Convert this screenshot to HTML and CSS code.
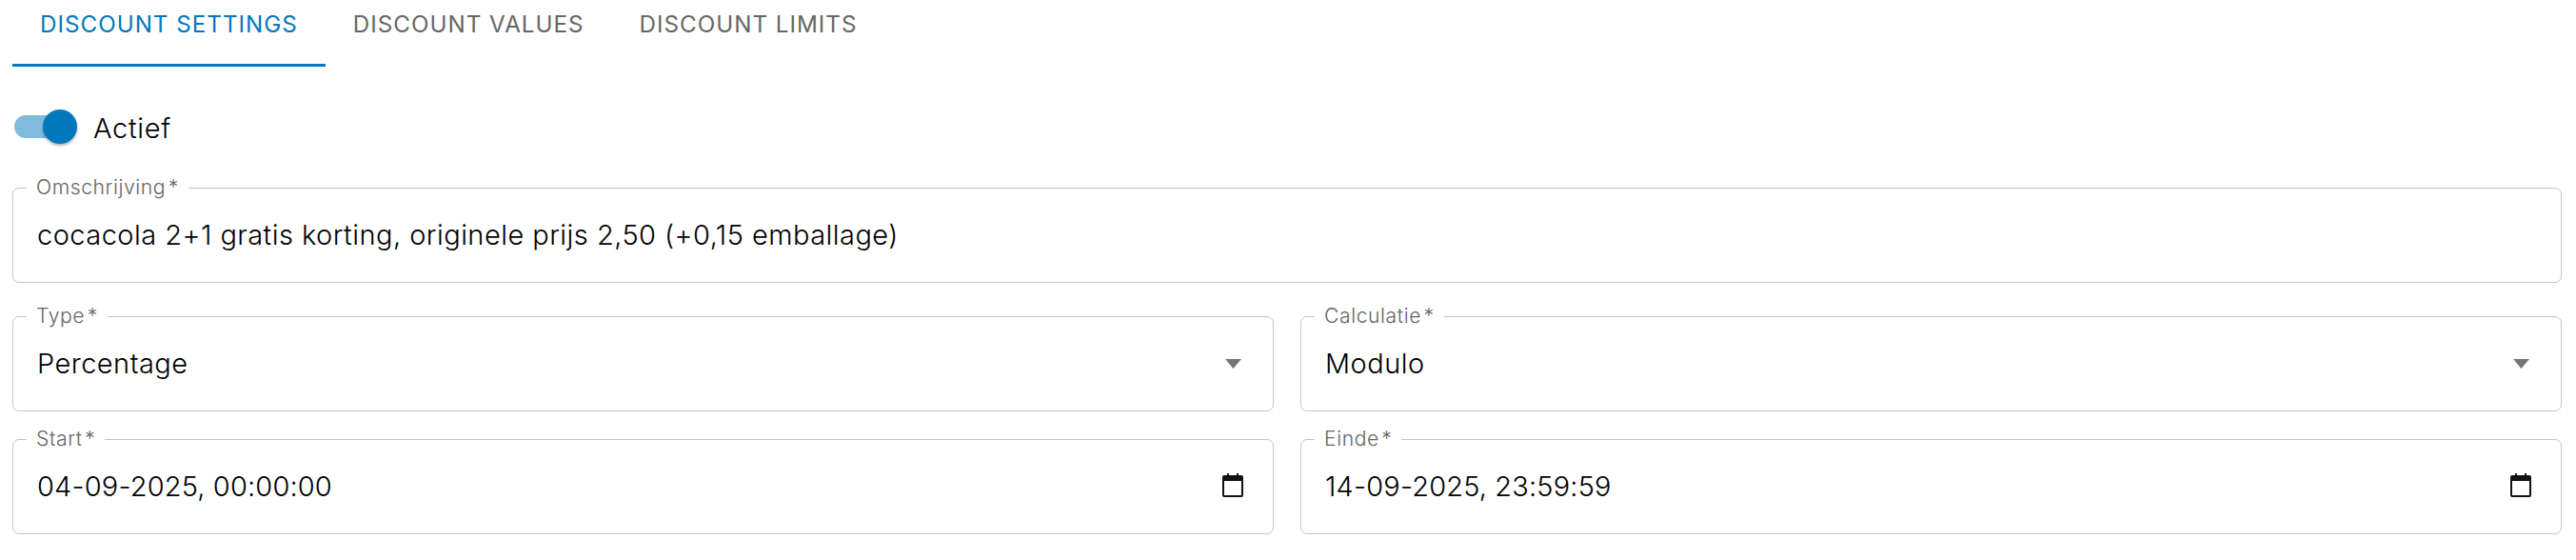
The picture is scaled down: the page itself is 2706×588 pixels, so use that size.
FILE: index.html
```html
<!DOCTYPE html>
<html lang="en">
<head>
    <meta charset="UTF-8">
    <title>Discount settings</title>
    <link rel="stylesheet" href="styles.css">
</head>
<body>
    <div class="tabs">
        <a class="tab active" href="#settings">DISCOUNT SETTINGS</a>
        <a class="tab" href="#values">DISCOUNT VALUES</a>
        <a class="tab" href="#limits">DISCOUNT LIMITS</a>
    </div>

    <div class="form">
        <div class="toggle-row">
            <span class="switch"><span class="switch-thumb"></span></span>
            <span class="toggle-label">Actief</span>
        </div>

        <div class="field">
            <span class="field-label">Omschrijving *</span>
            <span class="field-value">cocacola 2+1 gratis korting, originele prijs 2,50 (+0,15 emballage)</span>
        </div>

        <div class="row">
            <div class="field">
                <span class="field-label">Type *</span>
                <span class="field-value">Percentage</span>
                <svg class="arrow" viewBox="0 0 17 10"><path d="M0 0h17L8.5 10z"/></svg>
            </div>
            <div class="field">
                <span class="field-label">Calculatie *</span>
                <span class="field-value">Modulo</span>
                <svg class="arrow" viewBox="0 0 17 10"><path d="M0 0h17L8.5 10z"/></svg>
            </div>
        </div>

        <div class="row row-dates">
            <div class="field">
                <span class="field-label">Start *</span>
                <span class="field-value date">04-09-2025, 00:00:00</span>
                <svg class="calendar" viewBox="0 0 22 25"><path d="M5 0h2v2h8V0h2v2h3a2 2 0 0 1 2 2v19a2 2 0 0 1-2 2H2a2 2 0 0 1-2-2V4a2 2 0 0 1 2-2h3zM2 8v15h18V8z"/></svg>
            </div>
            <div class="field">
                <span class="field-label">Einde *</span>
                <span class="field-value date">14-09-2025, 23:59:59</span>
                <svg class="calendar" viewBox="0 0 22 25"><path d="M5 0h2v2h8V0h2v2h3a2 2 0 0 1 2 2v19a2 2 0 0 1-2 2H2a2 2 0 0 1-2-2V4a2 2 0 0 1 2-2h3zM2 8v15h18V8z"/></svg>
            </div>
        </div>
    </div>
</body>
</html>
```
FILE: styles.css
```css
body {
    font-family: Inter, "Open Sans", sans-serif;
    font-weight: 300;
    background-color: #fff;
    margin: 0;
    padding: 0;
    color: #000;
}

.tabs {
    display: flex;
    padding-left: 13px;
    height: 70px;
}

.tab {
    padding: 0 29px;
    height: 67px;
    line-height: 52px;
    font-size: 24.2px;
    font-weight: 400;
    letter-spacing: 1px;
    color: #666;
    text-decoration: none;
    white-space: nowrap;
}

.tab.active {
    color: #0277bd;
    border-bottom: 3px solid #0277bd;
}

.form {
    padding: 0 15px 0 13px;
}

.toggle-row {
    display: flex;
    align-items: center;
    height: 36px;
    margin-top: 45px;
    padding-left: 2px;
}

.switch {
    position: relative;
    display: block;
    width: 60px;
    height: 24px;
    border-radius: 12px;
    background-color: #80bbde;
}

.switch-thumb {
    position: absolute;
    top: -6px;
    right: -6px;
    width: 36px;
    height: 36px;
    border-radius: 50%;
    background-color: #0277bd;
    box-shadow: 0 2px 3px rgba(0, 0, 0, 0.3);
}

.toggle-label {
    margin-left: 23px;
    padding-top: 2px;
    font-size: 29px;
    letter-spacing: 0.7px;
}

.field {
    position: relative;
    display: flex;
    align-items: center;
    flex: 1;
    height: 100px;
    box-sizing: border-box;
    margin-top: 46px;
    padding: 0 25px 1px;
    border: 1.5px solid #c4c4c4;
    border-radius: 7px;
}

.row {
    display: flex;
    gap: 28px;
    margin-top: 35px;
}

.row .field {
    margin-top: 0;
}

.row-dates {
    margin-top: 29px;
}

.field-label {
    position: absolute;
    top: -14px;
    left: 14px;
    padding: 0 10px;
    background-color: #fff;
    font-size: 21.2px;
    line-height: 25px;
    letter-spacing: 0.55px;
    word-spacing: -4px;
    color: #666;
}

.field-value {
    flex: 1;
    font-size: 29px;
    letter-spacing: 0.46px;
    white-space: nowrap;
}

.field-value.date {
    letter-spacing: 0.15px;
}

.arrow {
    width: 17px;
    height: 10px;
    margin-right: 8px;
    fill: #757575;
}

.calendar {
    width: 22px;
    height: 25px;
    margin-right: 6px;
    margin-top: -3px;
    fill: #111;
}
```
